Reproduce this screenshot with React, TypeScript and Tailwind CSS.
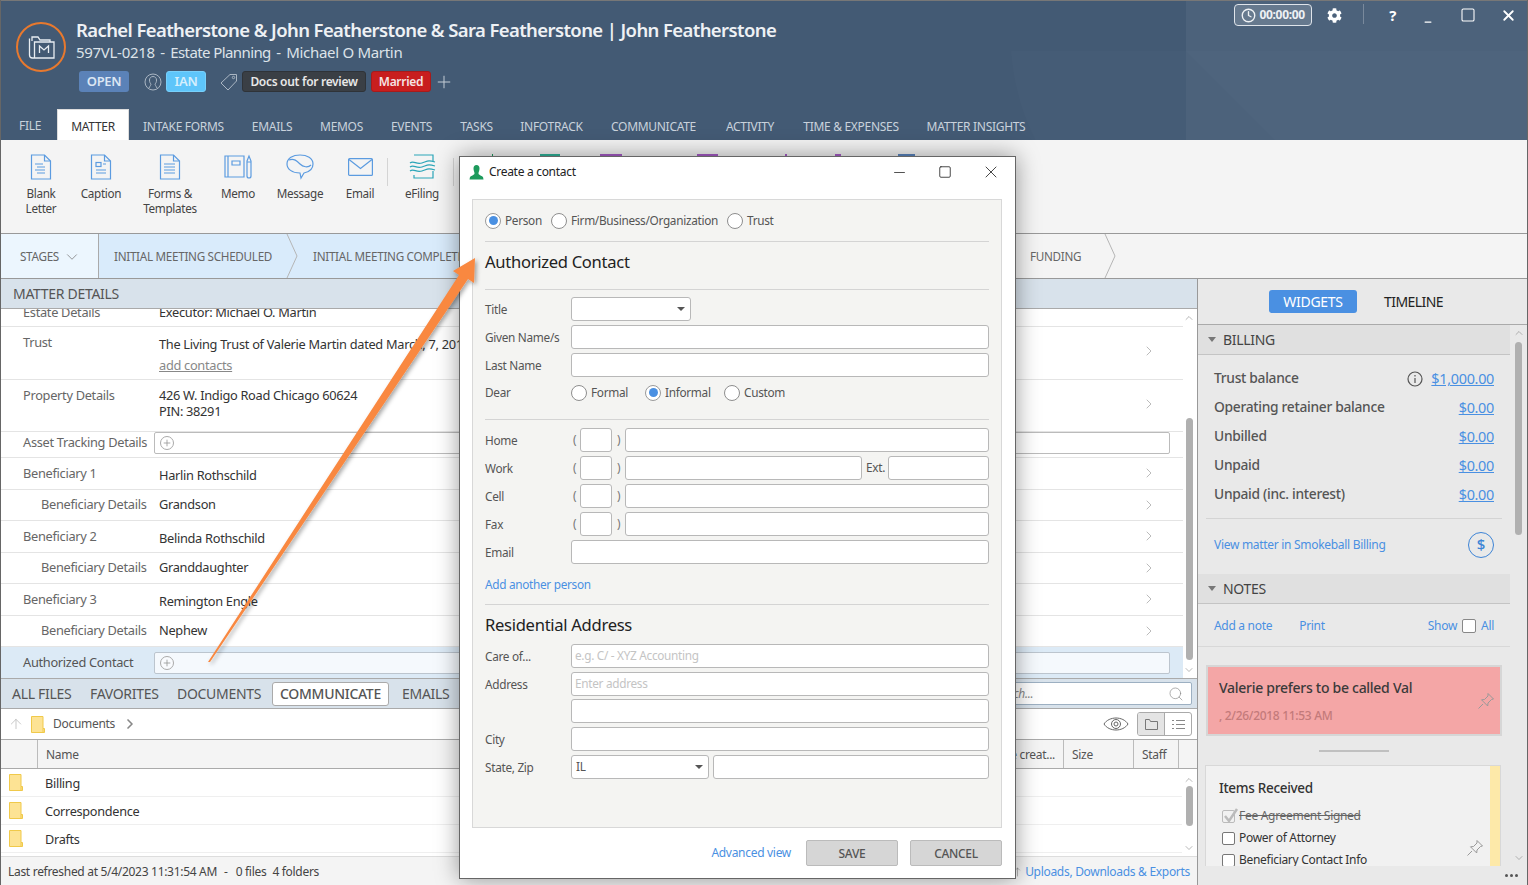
import { ReactNode } from "react";
import { ArrowDownUp, ChevronDown, ChevronRight, ChevronUp, Search, Plus, ArrowUp, X, Minus, Square, Clock } from "lucide-react";
import { FaCog } from "react-icons/fa";

const TABS = [
  { label: "FILE", cls: "w-[56px] pl-[18px] text-[#c9d2dc] pt-[2px]" },
  { label: "MATTER", cls: "w-[72px] justify-center bg-white text-[#333] border-t border-x border-[#ddd] pt-[4px]" },
  { label: "INTAKE FORMS", cls: "w-[109px] justify-center text-[#c9d2dc] pt-[4px]" },
  { label: "EMAILS", cls: "w-[68px] justify-center text-[#c9d2dc] pt-[4px]" },
  { label: "MEMOS", cls: "w-[71px] justify-center text-[#c9d2dc] pt-[4px]" },
  { label: "EVENTS", cls: "w-[69px] justify-center text-[#c9d2dc] pt-[4px]" },
  { label: "TASKS", cls: "w-[61px] justify-center text-[#c9d2dc] pt-[4px]" },
  { label: "INFOTRACK", cls: "w-[89px] justify-center text-[#c9d2dc] pt-[4px]" },
  { label: "COMMUNICATE", cls: "w-[115px] justify-center text-[#c9d2dc] pt-[4px]" },
  { label: "ACTIVITY", cls: "w-[78px] justify-center text-[#c9d2dc] pt-[4px]" },
  { label: "TIME & EXPENSES", cls: "w-[124px] justify-center text-[#c9d2dc] pt-[4px]" },
  { label: "MATTER INSIGHTS", cls: "w-[126px] justify-center text-[#c9d2dc] pt-[4px]" },
];

const ROWS = [
  { label: "Trust", value: "The Living Trust of Valerie Martin dated March, 7, 2018", link: "add contacts", cls: "h-[53px] items-start pt-[6px]" },
  { label: "Property Details", value: "426 W. Indigo Road Chicago 60624", second: "PIN: 38291", cls: "h-[52px] items-start pt-[6px]" },
];

const PEOPLE = [
  { label: "Beneficiary 1", value: "Harlin Rothschild", indent: false },
  { label: "Beneficiary Details", value: "Grandson", indent: true },
  { label: "Beneficiary 2", value: "Belinda Rothschild", indent: false },
  { label: "Beneficiary Details", value: "Granddaughter", indent: true },
  { label: "Beneficiary 3", value: "Remington Engle", indent: false },
  { label: "Beneficiary Details", value: "Nephew", indent: true },
];

const BILLING = [
  { label: "Trust balance", value: "$1,000.00" },
  { label: "Operating retainer balance", value: "$0.00" },
  { label: "Unbilled", value: "$0.00" },
  { label: "Unpaid", value: "$0.00" },
  { label: "Unpaid (inc. interest)", value: "$0.00" },
];

function DocIcon({ lines, box }: { lines: string; box?: boolean }) {
  return (
    <svg width="22" height="26" viewBox="0 0 22 26" fill="none" stroke="#5b9be0" strokeWidth="1.2">
      <path d="M1.5 1h13l6 6v18h-19z" />
      <path d="M14.5 1v6h6" />
      {box && <rect x="6" y="8.5" width="5" height="4" />}
      <path d={lines} />
    </svg>
  );
}

function RibbonItem({ icon, label, cls }: { icon: ReactNode; label: ReactNode; cls: string }) {
  return (
    <div className={`flex flex-col items-center shrink-0 ${cls}`}>
      <div className="h-[26px] flex items-center justify-center">{icon}</div>
      <div className="mt-[6px] text-center leading-[15px] text-[11.7px] text-[#444]">{label}</div>
    </div>
  );
}

function Field({ placeholder, cls }: { placeholder?: string; cls?: string }) {
  return (
    <div className={`h-6 bg-white border border-[#b8b8b8] rounded-[3px] pl-[3px] flex items-center text-[#c4c4c4] ${cls ?? "flex-1"}`}>
      {placeholder}
    </div>
  );
}

function Radio({ on, label, cls }: { on?: boolean; label: string; cls: string }) {
  return (
    <div className={`flex items-center gap-[4px] ${cls}`}>
      <span className={`w-4 h-4 rounded-full bg-white border flex items-center justify-center ${on ? "border-[#9a9a9a]" : "border-[#8e8e8e]"}`}>
        {on && <span className="w-[9px] h-[9px] rounded-full bg-[#4a90e2]" />}
      </span>
      <span className="text-[#555]">{label}</span>
    </div>
  );
}

function FormRow({ label, children, cls }: { label: string; children: ReactNode; cls?: string }) {
  return (
    <div className={`flex h-6 ${cls ?? "mt-1"}`}>
      <div className="w-[86px] text-[#555] leading-[24px] shrink-0">{label}</div>
      <div className="flex-1 flex items-center">{children}</div>
    </div>
  );
}

function Phone({ label, children }: { label: string; children?: ReactNode }) {
  return (
    <FormRow label={label}>
      <span className="w-[9px] pl-[2px] text-[#777]">(</span>
      <Field cls="w-[32px] ml-0" />
      <span className="w-[13px] pl-[5px] text-[#777]">)</span>
      {children ?? <Field />}
    </FormRow>
  );
}

function SelectField({ value, cls }: { value?: string; cls: string }) {
  return (
    <div className={`h-6 bg-white border border-[#b8b8b8] rounded-[3px] pl-[4px] pr-[4px] flex items-center justify-between text-[#555] ${cls}`}>
      <span>{value}</span>
      <span className="w-0 h-0 border-x-[4px] border-x-transparent border-t-[4px] border-t-[#555] mr-[1px]" />
    </div>
  );
}

function FolderIcon() {
  return (
    <svg width="14" height="17" viewBox="0 0 14 17" className="shrink-0">
      <path d="M.5.5h11.5v12h1.5v4H.5z" fill="#fde394" stroke="#f0c94a" />
      <path d="M12 12.5v4" stroke="#f0c94a" />
    </svg>
  );
}

function PlusCircle() {
  return (
    <span className="w-[14px] h-[14px] rounded-full border border-[#aaa] flex items-center justify-center bg-white/40">
      <Plus size={10} className="text-[#999]" />
    </span>
  );
}

function Pin() {
  return (
    <svg width="18" height="18" viewBox="0 0 18 18" fill="none" stroke="#999" strokeWidth="1">
      <path d="M11 1.5l5.5 5.500-2 .5-3.500 3.500-.3 3-2-2-2.200-2.200-2-2 3-.3 3.500-3.500zM6 12L1.500 16.500" />
    </svg>
  );
}

export default function App() {
  return (
    <div className="relative w-[1528px] h-[885px] overflow-hidden bg-white font-['Noto_Sans',sans-serif] text-[12px] tracking-[-0.025em] flex flex-col border-x border-[#666]">
      {/* Header */}
      <header className="relative h-[140px] shrink-0 bg-[#435a74] border-t border-[#777] flex flex-col overflow-hidden">
        <svg className="absolute inset-0" width="1528" height="140">
          <path d="M1185 0H1528V140H1185z" fill="#fff" fillOpacity=".05" />
          <path d="M1010 50H1528V140H1035Q1014 100 1010 50z" fill="#fff" fillOpacity=".015" />
          <path d="M1185 50L1275 140H1185z" fill="#000" fillOpacity=".015" />
        </svg>
        <div className="relative flex-1 flex pl-[15px]">
          <div className="w-[50px] h-[50px] mt-[21px] rounded-full border-2 border-[#e8792e] flex items-center justify-center shrink-0">
            <svg width="27" height="23" viewBox="0 0 27 23" fill="none" stroke="#e8edf2" strokeWidth="1.3">
              <path d="M4 5V1h6l2 3h10v2" />
              <path d="M1.500 2.500V19c0 2 1 3 3 3H26V6H6.500v16" />
              <path d="M11.500 17v-7l4.500 4 4.500-4v7" />
            </svg>
          </div>
          <div className="ml-[10px] pt-[17px]">
            <div className="text-[18.5px] leading-[24px] font-semibold text-[#eef1f4] tracking-[-0.033em] whitespace-nowrap">
              Rachel Featherstone &amp; John Featherstone &amp; Sara Featherstone | John Featherstone
            </div>
            <div className="text-[15px] leading-[21px] text-[#dde3e9] whitespace-nowrap flex gap-[5.5px]">
              <span>597VL-0218</span>
              <span>-</span>
              <span className="tracking-[-0.04em]">Estate Planning</span>
              <span>-</span>
              <span>Michael O Martin</span>
            </div>
            <div className="flex items-center mt-[8px] ml-[3px]">
              <span className="w-[50px] h-[21px] rounded-[3px] bg-[#5b82b8] text-[#dbe6f3] text-[13px] font-semibold flex items-center justify-center">OPEN</span>
              <svg className="ml-[15px]" width="18" height="18" viewBox="0 0 18 18" fill="none" stroke="#aab6c3" strokeWidth="1">
                <circle cx="9" cy="9" r="8" />
                <path d="M5 15c1-2 2-3 2-4-1-1-1.500-2-1.500-4C5.500 5 7 3.500 9 3.500S12.500 5 12.500 7c0 2-.5 3-1.500 4 0 1 1 2 2 4" />
              </svg>
              <span className="ml-[4px] w-[40px] h-[21px] rounded-[3px] bg-[#5ec5fa] border border-[#78d0fb] text-[#d5effd] text-[13px] font-semibold flex items-center justify-center">IAN</span>
              <svg className="ml-[14px]" width="18" height="18" viewBox="0 0 18 18" fill="none" stroke="#aab6c3" strokeWidth="1">
                <path d="M1 10L10 1.500h6.500V8L8 17z" />
                <circle cx="13.500" cy="4.500" r="1.200" />
              </svg>
              <span className="ml-[4px] w-[124px] h-[21px] rounded-[3px] bg-[#3a3f45] border border-[#2f3338] text-[#e8e8e8] font-semibold flex items-center justify-center whitespace-nowrap">Docs out for review</span>
              <span className="ml-[5px] w-[60px] h-[21px] rounded-[3px] bg-[#c81e1e] border border-[#a71b1b] text-[#f5e4e4] font-semibold flex items-center justify-center">Married</span>
              <Plus size={20} strokeWidth={1.200} className="ml-[3px] text-[#c4ccd5]" />
            </div>
          </div>
          <div className="ml-auto flex items-start pt-[3px] text-white">
            <div className="w-[78px] h-[22px] rounded-[4px] border border-[#dfe4ea] bg-white/15 flex items-center justify-center gap-[3px] font-bold text-[12px] text-[#eef1f4]">
              <Clock size={15} strokeWidth={2.200} />
              00:00:00
            </div>
            <FaCog size={15} className="ml-[15px] mt-[4px]" />
            <div className="ml-[21px] w-px h-[20px] bg-white/25" />
            <span className="ml-[25px] text-[15px] font-bold leading-[22px]">?</span>
            <Minus size={10} strokeWidth={3} className="ml-[27px] mt-[13px]" />
            <Square size={16} strokeWidth={1.600} className="ml-[27px] mt-[3px]" />
            <X size={17} strokeWidth={2.600} className="ml-[24px] mt-[3px] mr-[10px]" />
          </div>
        </div>
        <nav className="relative h-[31px] flex items-stretch pl-0 whitespace-nowrap">
          {TABS.map((t) => (
            <div key={t.label} className={`flex items-center ${t.cls}`}>{t.label}</div>
          ))}
        </nav>
      </header>

      {/* Ribbon */}
      <div className="h-[94px] shrink-0 bg-[#f4f4f4] border-b border-[#999] flex pt-[14px] whitespace-nowrap">
        <RibbonItem cls="w-[58px] ml-[11px]" label={<>Blank<br />Letter</>} icon={<DocIcon lines="M5 10h8M7 13h8M5 16h10M7 19h8" />} />
        <RibbonItem cls="w-[62px]" label="Caption" icon={<DocIcon box lines="M13 10h3M6 16h10M6 19h10" />} />
        <RibbonItem cls="w-[76px]" label={<>Forms &amp;<br />Templates</>} icon={<DocIcon lines="M5 10h11M5 13h11M5 16h11M5 19h11" />} />
        <RibbonItem cls="w-[60px]" label="Memo" icon={
          <svg width="28" height="26" viewBox="0 0 28 26" fill="none" stroke="#5b9be0" strokeWidth="1.2">
            <path d="M1 2h19v21H1zM4 2v21M8 7h8v4H8z" />
            <path d="M23 7l2-5 2 5v15a2 2 0 01-4 0zM23 8h4" />
          </svg>
        } />
        <RibbonItem cls="w-[64px]" label="Message" icon={
          <svg width="28" height="26" viewBox="0 0 28 26" fill="none" stroke="#5b9be0" strokeWidth="1.2">
            <path d="M14 1c7 0 13 3 13 9 0 5-4 8-9 9l-3 5-1-5C6 19 1 15 1 10 1 4 7 1 14 1z" />
            <path d="M3 6c5-2 8 1 11 4s8 4 11 1" />
          </svg>
        } />
        <RibbonItem cls="w-[56px]" label="Email" icon={
          <svg width="25" height="18" viewBox="0 0 25 18" fill="none" stroke="#5b9be0" strokeWidth="1.2">
            <rect x=".6" y=".6" width="23.800" height="16.800" rx="1" />
            <path d="M1 1.500l11.500 9 11.500-9" />
          </svg>
        } />
        <div className="w-px h-[28px] bg-[#d4d4d4] ml-[-1px] mr-[9px] mt-[4px]" />
        <RibbonItem cls="w-[50px]" label="eFiling" icon={
          <svg width="27" height="26" viewBox="0 0 27 26" fill="none" stroke="#2aa5b8" strokeWidth="1.2">
            <path d="M5 1h19v6M24 17v7H5v-3" />
            <path d="M1 9c4-3 6 2 12 0s6-3 13-1M1 13c4-3 6 2 12 0s6-3 13-1M1 17c4-3 6 2 12 0s6-3 13-1" />
          </svg>
        } />
        <div className="w-px h-[28px] bg-[#d4d4d4] ml-[6px] mt-[4px]" />
        {/* Tops of the ribbon icons that the dialog covers */}
        <div className="flex h-[2px]">
          <span className="ml-[38px] w-px bg-[#1d9a5c]" />
          <span className="ml-[47px] w-[20px] bg-[#2fb59a]" />
          <span className="ml-[40px] w-[22px] bg-[#a85cc8]" />
          <span className="ml-[75px] w-[21px] bg-[#a85cc8]" />
          <span className="ml-[67px] w-[2px] bg-[#a85cc8]" />
          <span className="ml-[48px] w-[6px] bg-[#a85cc8]" />
          <span className="ml-[57px] w-[17px] bg-[#5b86c0]" />
        </div>
      </div>

      {/* Stages */}
      <div className="h-[45px] shrink-0 flex bg-[#f4f4f4] border-b border-[#999] text-[11.7px] text-[#666] whitespace-nowrap">
        <div className="w-[98px] bg-[#ecf6fe] border-r border-[#aaa] pl-[19px] pt-[1px] flex items-center gap-[4px]">
          STAGES <ChevronDown size={18} strokeWidth={1} className="text-[#777]" />
        </div>
        <Stage cls="w-[199px] bg-[#d9ebfb] pl-[15px]" label="INITIAL MEETING SCHEDULED" />
        <Stage cls="w-[200px] bg-[#d9ebfb] pl-[15px]" label="INITIAL MEETING COMPLETE" />
        <div className="w-[513px] bg-[#d9ebfb]" />
        <Stage cls="w-[105px] pl-[19px]" label="FUNDING" />
      </div>

      {/* Body */}
      <div className="flex-1 min-h-0 flex">
        <main className="w-[1197px] flex flex-col border-r border-[#999] shrink-0">
          <div className="h-[30px] shrink-0 bg-[#d8e2eb] border-b border-[#aaa] pl-[12px] flex items-center text-[14px] text-[#555]">MATTER DETAILS</div>

          {/* Matter rows */}
          <div className="h-[369px] shrink-0 flex overflow-hidden text-[12.8px]">
            <div className="w-[1182px] shrink-0">
              <div className="h-[18px] border-b border-[#e4e4e4] flex items-end overflow-hidden pl-[22px] text-[#666]">
                <span className="w-[136px] leading-[16px] translate-y-[-6px]">Estate Details</span>
                <span className="text-[#333] leading-[16px] translate-y-[-6px]">Executor: Michael O. Martin</span>
              </div>
              {ROWS.map((r) => (
                <div key={r.label} className={`flex border-b border-[#e4e4e4] pl-[22px] pr-[26px] ${r.cls}`}>
                  <div className="w-[136px] text-[#666]">{r.label}</div>
                  <div className={`flex-1 text-[#333] leading-[16px] ${r.link ? "pt-[3px]" : "pt-[1px]"}`}>
                    <div>{r.value}</div>
                    {r.link && <div className="mt-[5px] text-[#888] underline">{r.link}</div>}
                    {r.second && <div>{r.second}</div>}
                  </div>
                  <ChevronRight size={16} strokeWidth={1} className="text-[#999] mt-[10px]" />
                </div>
              ))}
              <div className="h-[26px] border-b border-[#e4e4e4] flex items-start pl-[22px] pr-[13px]">
                <div className="w-[131px] text-[#666] whitespace-nowrap leading-[20px]">Asset Tracking Details</div>
                <div className="flex-1 h-[22px] border border-[#bbb] rounded-[2px] pl-[5px] flex items-center"><PlusCircle /></div>
              </div>
              {PEOPLE.map((p, i) => (
                <div key={i} className={`h-[31.500px] border-b border-[#e4e4e4] flex items-center pr-[26px] ${p.indent ? "pl-[40px]" : "pl-[22px]"}`}>
                  <div className={`text-[#666] ${p.indent ? "w-[118px]" : "w-[136px]"}`}>{p.label}</div>
                  <div className={`flex-1 text-[#333] ${p.indent ? "" : "pt-[4px]"}`}>{p.value}</div>
                  <ChevronRight size={16} strokeWidth={1} className="text-[#999]" />
                </div>
              ))}
              <div className="h-[31px] bg-[#dceaf6] flex items-center pl-[22px] pr-[13px]">
                <div className="w-[131px] text-[#555]">Authorized Contact</div>
                <div className="flex-1 h-[22px] bg-[#f5f9fd] border border-[#bcc5ce] rounded-[2px] pl-[5px] flex items-center"><PlusCircle /></div>
              </div>
            </div>
            <ScrollTrack cls="w-[14px] pr-[2px]" up="mt-[3px]" thumb="h-[242px] mt-[94px]" />
          </div>

          {/* Files */}
          <div className="h-[31px] shrink-0 bg-[#d8e2eb] border-y border-[#aaa] flex items-center pl-[11px] text-[14px] text-[#555] whitespace-nowrap">
            <span className="w-[78px]">ALL FILES</span>
            <span className="w-[87px]">FAVORITES</span>
            <span className="w-[95px]">DOCUMENTS</span>
            <span className="w-[117px] h-[24px] bg-white border border-[#aaa] rounded-[3px] flex items-center justify-center font-medium">COMMUNICATE</span>
            <span className="ml-[13px]">EMAILS</span>
            <div className="ml-auto mr-[5px] w-[210px] h-[23px] bg-white border border-[#9db0c2] rounded-[2px] flex items-center pl-2 pr-[7px] text-[12px] text-[#888] justify-between italic">
              Search...
              <Search size={16} strokeWidth={1} className="text-[#888]" />
            </div>
          </div>
          <div className="h-[31px] shrink-0 border-b border-[#aaa] flex items-center pl-[7px]">
            <ArrowUp size={16} strokeWidth={1.200} className="text-[#bbb]" />
            <span className="ml-[7px]"><FolderIcon /></span>
            <span className="ml-[8px] text-[#555]">Documents</span>
            <ChevronRight size={16} strokeWidth={2.500} className="ml-[7px] text-[#888]" />
            <svg className="ml-auto" width="26" height="14" viewBox="0 0 26 14" fill="none" stroke="#666" strokeWidth="1">
              <path d="M1 7c5-8 19-8 24 0-5 8-19 8-24 0z" />
              <circle cx="13" cy="7" r="4.500" />
              <circle cx="13" cy="7" r="2" />
            </svg>
            <div className="ml-[8px] mr-[5px] w-[55px] h-[24px] border border-[#aaa] rounded-[3px] flex overflow-hidden">
              <div className="w-[27px] bg-[#e4e4e4] border-r border-[#aaa] flex items-center justify-center">
                <svg width="13" height="11" viewBox="0 0 13 11" fill="none" stroke="#777"><path d="M.5 10.500V.5h4l1 2h7v8z" /></svg>
              </div>
              <div className="flex-1 flex items-center justify-center">
                <svg width="13" height="11" viewBox="0 0 13 11" fill="none" stroke="#888"><path d="M0 1.500h2M4 1.500h9M0 5.500h2M4 5.500h9M0 9.500h2M4 9.500h9" /></svg>
              </div>
            </div>
          </div>
          <div className="h-[29px] shrink-0 bg-[#f4f4f4] border-b border-[#aaa] flex items-stretch text-[#555] pt-0">
            <div className="w-[37px] border-r border-[#bbb]" />
            <div className="w-[1026px] border-r border-[#bbb] pl-[8px] pt-[1px] flex items-center justify-between pr-[8px]">
              <span>Name</span><span>Date creat...</span>
            </div>
            <div className="w-[70px] border-r border-[#bbb] pl-[8px] pt-[1px] flex items-center">Size</div>
            <div className="w-[45px] border-r border-[#bbb] pl-[8px] pt-[1px] flex items-center">Staff</div>
          </div>
          <div className="flex-1 min-h-0 flex">
            <div className="w-[1181px] shrink-0">
              {["Billing", "Correspondence", "Drafts"].map((n) => (
                <div key={n} className="h-[28px] border-b border-[#efefef] flex items-center pl-[8px] text-[12.7px] text-[#333]">
                  <FolderIcon />
                  <span className="ml-[22px] pt-[3px]">{n}</span>
                </div>
              ))}
            </div>
            <ScrollTrack cls="w-[15px] pr-[1px]" up="mt-[5px]" thumb="h-[40px]" />
          </div>
          <div className="h-[29px] shrink-0 bg-[#f4f4f4] border-t border-[#ddd] flex items-center pl-[7px] pr-[7px] pt-[1px] text-[#444] whitespace-pre">
            <span>Last refreshed at 5/4/2023 11:31:54 AM</span>
            <span className="ml-[7px]">-</span>
            <span className="ml-[8px]">0 files</span>
            <span className="ml-[6px]">4 folders</span>
            <ArrowDownUp size={12} strokeWidth={1} className="ml-auto mr-[4px] text-[#777]" />
            <span className="text-[#4a90e2]">Uploads, Downloads &amp; Exports</span>
          </div>
        </main>

        {/* Widgets */}
        <aside className="flex-1 min-w-0 bg-[#e9e9e9] flex flex-col">
          <div className="h-[46px] shrink-0 border-b border-[#aaa] flex items-center pl-[71px] text-[14px]">
            <span className="w-[88px] h-[23px] rounded-[3px] bg-[#4a90e2] text-white flex items-center justify-center">WIDGETS</span>
            <span className="ml-[27px] text-[#222] tracking-[-0.04em]">TIMELINE</span>
          </div>
          <div className="flex-1 min-h-0 flex">
            <div className="w-[312px] shrink-0 overflow-hidden">
              <SectionHead label="BILLING" />
              <div className="mx-[8px] px-[8px] pt-[9px] pb-[9px] border-b border-[#d4d4d4]">
                {BILLING.map((b, i) => (
                  <div key={b.label} className="h-[29px] flex items-center text-[13.800px] font-medium text-[#555]">
                    <span>{b.label}</span>
                    {i === 0 && (
                      <svg className="ml-auto mr-[8px]" width="16" height="16" viewBox="0 0 16 16" fill="none" stroke="#555" strokeWidth="1.200">
                        <circle cx="8" cy="8" r="7" />
                        <path d="M8 7v5M8 4v1.500" />
                      </svg>
                    )}
                    <span className={`text-[14.400px] font-normal text-[#4a90e2] underline ${i === 0 ? "" : "ml-auto"}`}>{b.value}</span>
                  </div>
                ))}
              </div>
              <div className="h-[55px] flex items-center justify-between pl-[16px] pr-[16px] pb-[4px] text-[#4a90e2]">
                <span>View matter in Smokeball Billing</span>
                <span className="w-[26px] h-[26px] rounded-full border border-[#3d84d6] flex items-center justify-center text-[15px] font-medium text-[#3d84d6]">$</span>
              </div>
              <SectionHead label="NOTES" />
              <div className="h-[43px] border-b border-[#d8d8d8] flex items-center pl-[16px] pr-[16px] pt-[1px] text-[#4a90e2]">
                <span>Add a note</span>
                <span className="ml-[27px]">Print</span>
                <span className="ml-auto">Show</span>
                <span className="mx-[5px] w-[14px] h-[14px] bg-white border border-[#888] rounded-[2px]" />
                <span>All</span>
              </div>
              <div className="mt-[18px] ml-[8px] h-[71px] w-[296px] bg-[#f4a6a6] border-2 border-[#d6d6d6] pl-[11px] pt-[12px] relative">
                <div className="text-[14px] font-medium text-[#3a3a3a] leading-[18px] tracking-[-0.02em]">Valerie prefers to be called Val</div>
                <div className="mt-[10px] text-[#c37a7a] font-medium">, 2/26/2018 11:53 AM</div>
                <span className="absolute right-[5px] top-[25px]"><Pin /></span>
              </div>
              <div className="mt-[14px] ml-[121px] w-[70px] h-[2px] bg-[#c0c0c0]" />
              <div className="mt-[13px] ml-[7px] w-[296px] h-[120px] bg-[#f1f1f1] border border-[#d8d8d8] flex">
                <div className="flex-1 pl-[13px] pt-[12px] relative">
                  <div className="text-[13.500px] font-medium text-[#333] leading-[20px]">Items Received</div>
                  <div className="mt-[7px] flex items-center h-[22px] text-[#666] line-through">
                    <span className="w-[13px] h-[13px] border border-[#bbb] rounded-[2px] mr-[4px] ml-[3px] relative">
                      <svg className="absolute -top-[4px] left-0" width="16" height="17" viewBox="0 0 16 17" fill="none" stroke="#bbb" strokeWidth="2.500"><path d="M2 9l4 5 8-12" /></svg>
                    </span>
                    Fee Agreement Signed
                  </div>
                  <div className="flex items-center h-[22px] text-[#333]">
                    <span className="w-[13px] h-[13px] bg-white border border-[#777] rounded-[2px] mr-[4px] ml-[3px]" />
                    Power of Attorney
                  </div>
                  <div className="flex items-center h-[22px] text-[#333]">
                    <span className="w-[13px] h-[13px] bg-white border border-[#777] rounded-[2px] mr-[4px] ml-[3px]" />
                    Beneficiary Contact Info
                  </div>
                  <span className="absolute right-[6px] top-[73px]"><Pin /></span>
                </div>
                <div className="w-[10px] bg-[#fde9a9]" />
              </div>
            </div>
            <ScrollTrack cls="w-[17px] bg-[#e9e9e9]" up="mt-[2px]" thumb="h-[193px] mt-[3px]" />
          </div>
          <div className="h-[19px] shrink-0 flex items-center justify-end pr-[9px] gap-[2px]">
            <span className="w-[3px] h-[3px] rounded-full bg-[#555]" />
            <span className="w-[3px] h-[3px] rounded-full bg-[#555]" />
            <span className="w-[3px] h-[3px] rounded-full bg-[#555]" />
          </div>
        </aside>
      </div>

      {/* Create a contact dialog */}
      <div className="absolute left-[458px] top-[156px] w-[557px] h-[723px] bg-white border border-[#666] shadow-[0_0_22px_rgba(0,0,0,0.4)] flex flex-col pl-[12px] pr-[13px] text-[11.800px]">
        <div className="h-[30px] -ml-[12px] -mr-[13px] pl-[9px] pr-[14px] flex items-center text-[12px] text-[#222] shrink-0">
          <svg width="15" height="15" viewBox="0 0 15 15" fill="#1d9a5c"><path d="M7.500 0C9.500 0 10.500 1.500 10.500 3.500S9.500 7 9.500 8.500s3 2 4.500 3.500l.5 2.500H.5l.5-2.500c1.500-1.500 4.500-2 4.500-3.500S4.500 5.500 4.500 3.500 5.500 0 7.500 0z" /></svg>
          <span className="ml-[5px]">Create a contact</span>
          <Minus size={17} strokeWidth={1.100} className="ml-auto text-[#222]" />
          <Square size={14} strokeWidth={1.400} className="ml-[30px] text-[#222]" />
          <X size={20} strokeWidth={1} className="ml-[29px] text-[#222]" />
        </div>
        <div className="h-[629px] mt-[12px] bg-[#f4f4f2] border border-[#d8d8d8] px-[12px] shrink-0">
          <div className="h-[42px] border-b border-[#d4d4d4] flex items-center">
            <Radio on label="Person" cls="w-[66px]" />
            <Radio label="Firm/Business/Organization" cls="w-[176px]" />
            <Radio label="Trust" cls="" />
          </div>
          <div className="h-[48px] border-b border-[#d4d4d4] text-[16.600px] text-[#222] leading-[40px]">Authorized Contact</div>
          <div className="pt-[3px]">
            <FormRow label="Title"><SelectField cls="w-[120px]" /></FormRow>
            <FormRow label="Given Name/s"><Field /></FormRow>
            <FormRow label="Last Name"><Field /></FormRow>
          </div>
          <div className="flex h-[43px] border-b border-[#d4d4d4] pb-[19px] pt-[8px] items-center">
            <span className="w-[86px] text-[#555]">Dear</span>
            <Radio label="Formal" cls="w-[74px]" />
            <Radio on label="Informal" cls="w-[79px]" />
            <Radio label="Custom" cls="" />
          </div>
          <div className="pt-[4px]">
            <Phone label="Home" />
            <Phone label="Work">
              <Field cls="w-[237px]" />
              <span className="w-[26px] pl-[4px] text-[#555]">Ext.</span>
              <Field />
            </Phone>
            <Phone label="Cell" />
            <Phone label="Fax" />
            <FormRow label="Email"><Field /></FormRow>
          </div>
          <div className="h-[41px] border-b border-[#d4d4d4] text-[#4a90e2] leading-[41px]">Add another person</div>
          <div className="h-[35px] text-[16.600px] text-[#222] leading-[40px]">Residential Address</div>
          <div>
            <FormRow label="Care of..."><Field placeholder="e.g. C/ - XYZ Accounting" /></FormRow>
            <FormRow label="Address"><Field placeholder="Enter address" /></FormRow>
            <FormRow label="" cls="mt-[3px]"><Field /></FormRow>
            <FormRow label="City"><Field /></FormRow>
            <FormRow label="State, Zip">
              <SelectField value="IL" cls="w-[138px] mr-[4px]" />
              <Field />
            </FormRow>
          </div>
        </div>
        <div className="flex items-center justify-end pt-[12px]">
          <span className="text-[#4a90e2] text-[12px]">Advanced view</span>
          <span className="ml-[15px] w-[92px] h-[26px] bg-[#d6d6d6] border border-[#bbb] rounded-[2px] flex items-center justify-center text-[#555] text-[12px] font-medium pt-[1px]">SAVE</span>
          <span className="ml-[12px] w-[92px] h-[26px] bg-[#d6d6d6] border border-[#bbb] rounded-[2px] flex items-center justify-center text-[#555] text-[12px] font-medium pt-[1px]">CANCEL</span>
        </div>
      </div>

      {/* Orange annotation arrow */}
      <svg className="absolute -left-px top-0 pointer-events-none" width="1528" height="885">
        <defs>
          <filter id="arrow-shadow" x="-20%" y="-20%" width="140%" height="140%">
            <feDropShadow dx="2" dy="2" stdDeviation="2" floodColor="#000" floodOpacity=".35" />
          </filter>
        </defs>
        <polygon points="208,662 459,275 453,271 475,258 474,283 468,279 210,662" fill="#f98840" filter="url(#arrow-shadow)" />
      </svg>
    </div>
  );
}

function Stage({ label, cls }: { label: string; cls: string }) {
  return (
    <div className={`relative flex items-center pt-[1px] ${cls}`}>
      {label}
      <svg className="absolute right-0 top-0" width="12" height="44" fill="none" stroke="#b5b5b5"><path d="M1 0l10 22L1 44" /></svg>
    </div>
  );
}

function SectionHead({ label }: { label: string }) {
  return (
    <div className="h-[30px] bg-[#e0e0e0] border-b border-[#c4c4c4] flex items-center pl-[10px] text-[14px] text-[#444]">
      <span className="w-0 h-0 border-x-[4px] border-x-transparent border-t-[5px] border-t-[#777] mr-[7px]" />
      {label}
    </div>
  );
}

function ScrollTrack({ cls, up, thumb }: { cls: string; up: string; thumb: string }) {
  return (
    <div className={`flex flex-col items-center ${cls}`}>
      <ChevronUp size={12} strokeWidth={1.200} className={`text-[#888] ${up}`} />
      <div className={`w-[7px] rounded-full bg-[#b0b0b0] ${thumb}`} />
      <ChevronDown size={12} strokeWidth={1.200} className="text-[#888] mt-auto mb-[2px]" />
    </div>
  );
}
